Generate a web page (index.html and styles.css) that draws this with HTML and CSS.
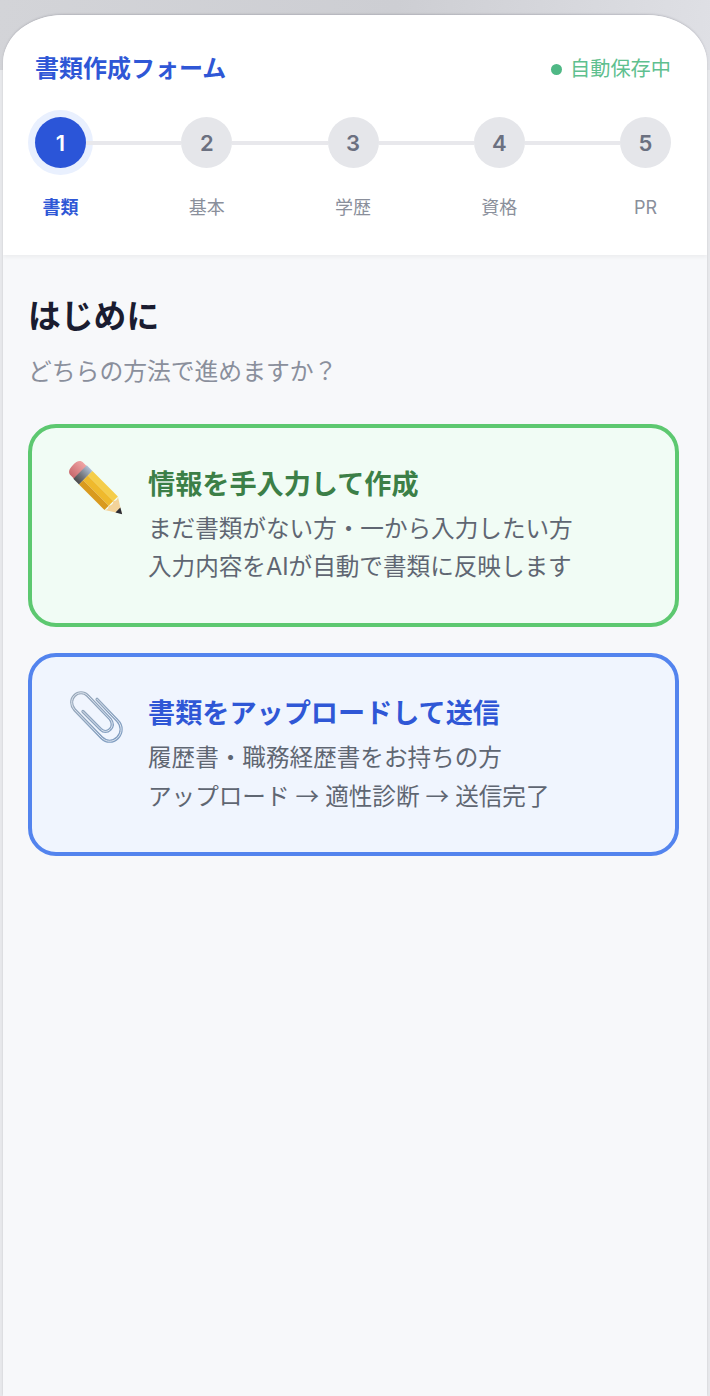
FILE: index.html
```html
<!DOCTYPE html>
<html lang="ja">
<head>
  <meta charset="UTF-8">
  <meta name="viewport" content="width=device-width, initial-scale=1.0">
  <title>書類作成フォーム</title>
  <link rel="stylesheet" href="styles.css">
</head>
<body>
  <div class="screen">
    <header class="form-header">
      <div class="header-top">
        <h1 class="form-title">書類作成フォーム</h1>
        <div class="autosave"><span class="autosave-dot"></span>自動保存中</div>
      </div>

      <div class="steps">
        <div class="step-circle active">1</div>
        <div class="step-line"></div>
        <div class="step-circle">2</div>
        <div class="step-line"></div>
        <div class="step-circle">3</div>
        <div class="step-line"></div>
        <div class="step-circle">4</div>
        <div class="step-line"></div>
        <div class="step-circle">5</div>
      </div>
      <div class="step-labels">
        <span class="step-label active">書類</span>
        <span class="step-label">基本</span>
        <span class="step-label">学歴</span>
        <span class="step-label">資格</span>
        <span class="step-label">PR</span>
      </div>
    </header>

    <main class="content">
      <h2 class="content-title">はじめに</h2>
      <p class="content-sub">どちらの方法で進めますか？</p>

      <div class="choice choice-green">
        <svg class="choice-icon" viewBox="0 0 60 60" aria-hidden="true">
          <defs>
            <linearGradient id="eraser" x1="0" y1="0" x2="0" y2="1">
              <stop offset="0" stop-color="#f0a5a5"/>
              <stop offset="1" stop-color="#c8686c"/>
            </linearGradient>
            <linearGradient id="ferrule" x1="0" y1="0" x2="0" y2="1">
              <stop offset="0" stop-color="#aebfd6"/>
              <stop offset="0.55" stop-color="#77797f"/>
              <stop offset="1" stop-color="#4b4a4c"/>
            </linearGradient>
          </defs>
          <g transform="translate(6 5) rotate(45)">
            <path d="M11 -9 H6 C1 -9 0 -5 0 0 C0 5 1 9 6 9 H11 Z" fill="url(#eraser)"/>
            <rect x="10" y="-9.5" width="8" height="19" fill="url(#ferrule)"/>
            <rect x="18" y="-9.5" width="36" height="6.5" fill="#f5cd4a"/>
            <rect x="18" y="-3" width="36" height="6.5" fill="#efb92c"/>
            <rect x="18" y="3.5" width="36" height="6" fill="#d99a1e"/>
            <path d="M54 -9.5 L69 0 L54 9.5 Q57 6.5 54 3.5 Q57 0 54 -3 Q57 -6.5 54 -9.5 Z" fill="#f3d39a"/>
            <path d="M63.5 -3.5 L69.5 0 L63.5 3.5 Z" fill="#2b2b33"/>
          </g>
        </svg>
        <div class="choice-body">
          <h3 class="choice-title">情報を手入力して作成</h3>
          <p class="choice-text">まだ書類がない方・一から入力したい方</p>
          <p class="choice-text">入力内容をAIが自動で書類に反映します</p>
        </div>
      </div>

      <div class="choice choice-blue">
        <svg class="choice-icon" viewBox="-1 -1 64 64" aria-hidden="true">
          <defs>
            <linearGradient id="clip" x1="0" y1="0" x2="1" y2="1">
              <stop offset="0" stop-color="#9aa9ba"/>
              <stop offset="1" stop-color="#7f9dc2"/>
            </linearGradient>
          </defs>
          <path class="clip-wire" d="M31 10 L53 33 C58 38 58 46 53 51 C48 56 41 56 36 51 L7 21 C3 16 3 10 7 6 C11 2 17 2 21 6 L45 31 C48 35 48 39 45 42 C42 45 38 45 35 42 L16 23"/>
          <path class="clip-shine" d="M31 10 L53 33 C58 38 58 46 53 51 C48 56 41 56 36 51 L7 21 C3 16 3 10 7 6 C11 2 17 2 21 6 L45 31 C48 35 48 39 45 42 C42 45 38 45 35 42 L16 23"/>
        </svg>
        <div class="choice-body">
          <h3 class="choice-title">書類をアップロードして送信</h3>
          <p class="choice-text">履歴書・職務経歴書をお持ちの方</p>
          <p class="choice-text">アップロード<span class="arrow">→</span>適性診断<span class="arrow">→</span>送信完了</p>
        </div>
      </div>
    </main>
  </div>
</body>
</html>
```

FILE: styles.css
```css
/* Reset */
body, h1, h2, h3, p {
    margin: 0;
    padding: 0;
}

body {
    font-family: 'Inter', 'Noto Sans CJK JP', sans-serif;
    background: linear-gradient(100deg, #d3d4d8 0%, #cdced3 55%, #dfe0e5 100%) top / 100% 70px no-repeat, #e7e8eb;
    padding: 15px 3px 0;
    height: 1396px;
    box-sizing: border-box;
    overflow: hidden;
}

/* Phone screen */
.screen {
    height: 1381px;
    background: #f7f8fa;
    border-radius: 60px 60px 0 0 / 48px 48px 0 0;
    box-shadow: 0 -1px 2px rgba(90, 92, 105, 0.25);
    overflow: hidden;
}

/* Header */
.form-header {
    height: 240px;
    box-sizing: border-box;
    padding: 36px 36px 0 32px;
    background: #ffffff;
    box-shadow: 0 2px 4px rgba(0, 0, 0, 0.05);
}

.header-top {
    display: flex;
    justify-content: space-between;
    align-items: center;
    height: 36px;
    margin-bottom: 30px;
}

.form-title {
    font-size: 24px;
    font-weight: 700;
    line-height: 36px;
    color: #2f57d6;
}

.autosave {
    display: flex;
    align-items: center;
    gap: 8px;
    font-size: 20.2px;
    line-height: 36px;
    color: #5fc08f;
}

.autosave-dot {
    width: 11px;
    height: 11px;
    border-radius: 50%;
    background: #4fb885;
}

/* Stepper */
.steps {
    display: flex;
    align-items: center;
}

.step-circle {
    flex: none;
    display: flex;
    align-items: center;
    justify-content: center;
    width: 51px;
    height: 51px;
    border-radius: 50%;
    background: #e5e6ea;
    color: #6b7080;
    font-size: 22px;
    font-weight: 600;
}

.step-circle.active {
    background: #2b55d8;
    color: #ffffff;
    box-shadow: 0 0 0 7px #e9f0fe;
}

.step-line {
    flex: 1;
    height: 4px;
    background: #e8e8ec;
}

.step-labels {
    display: flex;
    justify-content: space-between;
    margin-top: 26px;
}

.step-label {
    width: 51px;
    text-align: center;
    white-space: nowrap;
    font-size: 18px;
    line-height: 27px;
    color: #8a8f9b;
}

.step-label.active {
    color: #2f57d6;
    font-weight: 700;
}

/* Main */
.content {
    padding: 38px 28px 0 25px;
}

.content-title {
    font-size: 32.8px;
    font-weight: 700;
    line-height: 46px;
    color: #1a1c30;
}

.content-sub {
    margin-top: 15px;
    font-size: 23.8px;
    line-height: 35px;
    color: #8a8f9c;
}

/* Choice cards */
.choice {
    display: flex;
    align-items: flex-start;
    gap: 21px;
    height: 203px;
    box-sizing: border-box;
    padding: 32px 36px 0 35px;
    border: 4px solid;
    border-radius: 28px;
}

.content-sub + .choice {
    margin-top: 35px;
}

.choice + .choice {
    margin-top: 26px;
}

.choice-green {
    border-color: #5dc870;
    background: #f1fcf5;
}

.choice-blue {
    border-color: #5384ee;
    background: #f0f5fe;
}

.choice-icon {
    flex: none;
    width: 60px;
    height: 60px;
}

.clip-wire {
    fill: none;
    stroke: url(#clip);
    stroke-width: 3.4;
    stroke-linecap: round;
}

.clip-shine {
    fill: none;
    stroke: #e4ebf4;
    stroke-width: 1;
    stroke-linecap: round;
}

.choice-body {
    padding-top: 5px;
}

.choice-title {
    font-size: 27.15px;
    font-weight: 700;
    line-height: 40px;
    margin-bottom: 5px;
}

.choice-green .choice-title {
    color: #3c7f47;
}

.choice-blue .choice-title {
    color: #2f57d6;
}

.choice-text {
    font-size: 23.6px;
    line-height: 37.5px;
    white-space: nowrap;
    color: #5f6672;
}

.arrow {
    margin: 0 6px;
    font-family: 'Noto Sans CJK JP', sans-serif;
}
```
